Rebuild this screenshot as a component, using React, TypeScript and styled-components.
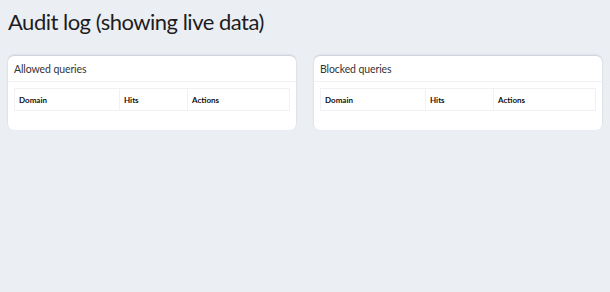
import React from "react";
import styled, { createGlobalStyle } from "styled-components";

const GlobalStyle = createGlobalStyle`
  html, body {
    margin: 0;
    padding: 0;
    background: #ebeef3;
  }
  body {
    font-family: "Lato", "Noto Sans", sans-serif;
    color: #222;
  }
`;

const Page = styled.div`
  padding: 8px 8px;
`;

const Title = styled.h1`
  font-size: 22px;
  letter-spacing: -0.5px;
  font-weight: 400;
  line-height: 28px;
  margin: 0 0 20px 0;
  color: #1d1d1f;
`;

const Columns = styled.div`
  display: grid;
  grid-template-columns: 1fr 1fr;
  gap: 18px;
`;

const Card = styled.div`
  background: #fff;
  border-radius: 6px;
  box-shadow: 0 -1px 2px rgba(40, 50, 80, 0.18);
`;

const CardHeader = styled.div`
  height: 26px;
  box-sizing: border-box;
  padding: 7px 6px 0 6px;
  font-size: 10.5px;
  letter-spacing: -0.1px;
  color: #333;
  border-bottom: 1px solid #f0f1f4;
`;

const CardBody = styled.div`
  padding: 6px 6px 19px 6px;
`;

const Table = styled.table`
  width: 100%;
  table-layout: fixed;
  border-collapse: collapse;
`;

const Th = styled.th<{ $w?: number }>`
  box-sizing: border-box;
  width: ${(p) => (p.$w ? `${p.$w}px` : "auto")};
  height: 22px;
  padding: 0 4px;
  text-align: left;
  font-size: 8px;
  font-weight: 700;
  color: #111;
  border: 1px solid #f0f1f4;
`;

function QueryCard({ title }: { title: string }) {
  return (
    <Card>
      <CardHeader>{title}</CardHeader>
      <CardBody>
        <Table>
          <thead>
            <tr>
              <Th $w={105}>Domain</Th>
              <Th $w={68}>Hits</Th>
              <Th>Actions</Th>
            </tr>
          </thead>
        </Table>
      </CardBody>
    </Card>
  );
}

export default function App() {
  return (
    <>
      <GlobalStyle />
      <Page>
        <Title>Audit log (showing live data)</Title>
        <Columns>
          <QueryCard title="Allowed queries" />
          <QueryCard title="Blocked queries" />
        </Columns>
      </Page>
    </>
  );
}
